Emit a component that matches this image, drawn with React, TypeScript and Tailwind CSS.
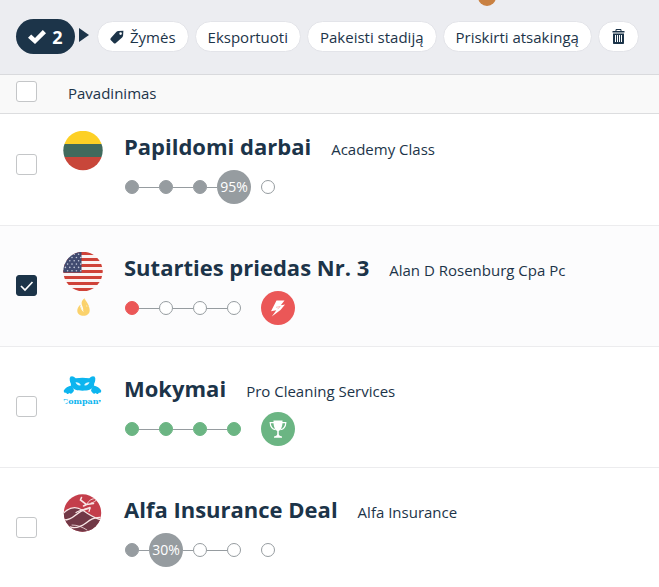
import { useState, type ReactNode } from "react";
import clsx from "clsx";

type StepState = "done" | "open" | "current";
type Tone = "gray" | "red" | "green";

interface Deal {
  id: string;
  title: string;
  company: string;
  logo: ReactNode;
  hot?: boolean;
  tone: Tone;
  steps: StepState[];
  progress?: string;
  result: "none" | "lost" | "won";
}

const fills: Record<Tone, string> = {
  gray: "bg-[#969ca0] border-[#969ca0]",
  red: "bg-[#eb5757] border-[#eb5757]",
  green: "bg-[#6bb583] border-[#6bb583]",
};

function LithuaniaFlag() {
  return (
    <svg viewBox="0 0 40 40" className="size-10" aria-hidden="true">
      <clipPath id="lt"><circle cx="20" cy="19.5" r="19.7" /></clipPath>
      <g clipPath="url(#lt)">
        <rect width="40" height="13" fill="#fdd025" />
        <rect y="13" width="40" height="13" fill="#406a5d" />
        <rect y="26" width="40" height="14" fill="#c8463a" />
      </g>
    </svg>
  );
}

function UsaFlag() {
  return (
    <svg viewBox="0 0 40 40" className="size-10" aria-hidden="true">
      <clipPath id="us"><circle cx="20" cy="19.5" r="19.7" /></clipPath>
      <g clipPath="url(#us)">
        <rect width="40" height="40" fill="#fbf3f2" />
        {[0, 1, 2, 3, 4, 5, 6].map((i) => (
          <rect key={i} y={i * 6} width="40" height="3" fill="#cf4238" />
        ))}
        <rect width="18.5" height="20.5" fill="#414b70" />
        {[0, 1, 2, 3, 4, 5].map((row) =>
          [0, 1, 2, 3].map((col) => (
            <circle key={`${row}-${col}`} cx={2.4 + col * 4.4 + (row % 2) * 2.2} cy={2.2 + row * 3.3} r="0.8" fill="#c3c8d8" />
          ))
        )}
      </g>
    </svg>
  );
}

function CatLogo() {
  return (
    <svg viewBox="0 0 40 40" className="size-10" aria-hidden="true">
      <clipPath id="cat"><circle cx="19.500" cy="20" r="20" /></clipPath>
      <g clipPath="url(#cat)">
        <g fill="#0db5ef">
          <path d="M7 3c2.300 0 4.200.8 5.700 2.300 4.600-.8 9-.8 13.600 0C27.800 3.800 29.700 3 32 3c.6 3 .3 5.500-.8 7.600.2 3.200-1.900 5.200-4.700 6.200-4 1.200-10 1.200-14 0-2.800-1-4.900-3-4.700-6.200C6.700 8.500 6.400 6 7 3Z" />
          <path d="M8.500 12.500C5 13.300 2.200 15 .8 17.500c-.3 1.800 1 2.600 2.300 2.200.8 1.600 2.600 1.500 3.300.4 1.200 1 2.900.6 3.400-.9 1.200-.7 1.300-1.700.9-2.700ZM30.500 12.500c3.500.8 6.300 2.500 7.700 5 .3 1.800-1 2.600-2.300 2.200-.8 1.600-2.600 1.500-3.300.4-1.200 1-2.900.6-3.400-.9-1.200-.7-1.300-1.700-.9-2.700Z" />
        </g>
        <path d="M12.500 9.300c2.400-.2 4.600.9 5.400 3-2.600.5-4.600-.7-5.400-3ZM26.500 9.300c-2.400-.2-4.600.9-5.400 3 2.600.5 4.600-.7 5.400-3Z" fill="#e6f8fe" />
        <text x="19.500" y="30.500" textAnchor="middle" fontSize="8" fill="#0db5ef" className="font-['DejaVu_Serif',serif] font-bold">Company</text>
      </g>
    </svg>
  );
}

function AlfaLogo() {
  return (
    <svg viewBox="0 0 40 40" className="size-10" aria-hidden="true">
      <clipPath id="alfa"><circle cx="19.500" cy="19" r="18.700" /></clipPath>
      <g clipPath="url(#alfa)">
        <rect width="40" height="40" fill="#c43e4b" />
        <path d="M0 19C5 14 12 12.500 18 15.500c7 3 12 8 22 11V40H0Z" fill="#713846" />
        <g fill="none" stroke="#f8e6e6" strokeLinecap="round">
          <path d="M0 19.500C6 13.500 13 12 19 16c7 4 11 8 20 10" strokeWidth="1.200" />
          <path d="M1 26c5 0 8-2 11-4.500S19 16 27 13.500" strokeWidth="1.500" />
          <path d="M13 18.500c4-2 7-4 14-4l-1 3" strokeWidth="1.200" />
          <path d="M7 33c7 2 12-1 16-4s8-6 15-5.500" strokeWidth="1.400" />
          <path d="M9 31c6 0 10 2 15 5" strokeWidth="0.800" />
          <path d="M18.500 3.500 17.500 6l6 4.500L20.500 12M23.500 10.500l7-1" strokeWidth="1.600" />
          <path d="M24 10c2-4 5-5.500 9-5.500M28 9c3-.5 5-2 6-4" strokeWidth="0.900" />
        </g>
      </g>
    </svg>
  );
}

function CheckIcon() {
  return (
    <svg viewBox="0 0 18 14" className="h-3.5 w-[18px]" aria-hidden="true">
      <path d="M0 7.700 3.200 4.400 7 8 14.800 0 18 3.200 7 14Z" fill="#fff" />
    </svg>
  );
}

function TagIcon() {
  return (
    <svg viewBox="0 0 14 14" className="size-3.5" aria-hidden="true">
      <path fillRule="evenodd" d="M13.400.7 8.300.9C7.600 1 7 1.300 6.500 1.800L.7 8.200c-.5.6-.5 1.200 0 1.700l3.200 3.300c.5.500 1.200.5 1.700 0l6.500-5.700c.6-.5.9-1.200 1-1.900ZM10.600 2.300a1.300 1.300 0 1 1 0 2.600 1.300 1.300 0 0 1 0-2.600Z" fill="#1c3449" />
    </svg>
  );
}

function TrashIcon() {
  return (
    <svg viewBox="0 0 13 15" className="h-[15px] w-[13px]" aria-hidden="true">
      <path d="M4 2V.5h5V2" fill="none" stroke="#1c3449" />
      <path d="M.5 2h12v1.500H.5Z" fill="#1c3449" />
      <path fillRule="evenodd" d="M1 4.500h11V14c0 .6-.4 1-1 1H2c-.6 0-1-.4-1-1ZM3 6v7h1V6Zm2 0v7h1V6Zm2 0v7h1V6Zm2 0v7h1V6Z" fill="#1c3449" />
    </svg>
  );
}

function FlameIcon() {
  return (
    <svg viewBox="0 0 13 18" className="h-[18px] w-[13px]" aria-hidden="true">
      <path d="M7.500.3C4 3 4.300 5.500 5.300 8c.8 2 1.200 3.500.8 5C5 11.500 4.300 9.500 3.200 6.800 1.200 8.700.2 10.700.3 12.800.4 16 3 17.800 6.500 17.800s6.200-1.900 6.200-5.500c0-2.300-.8-3.800-1.700-5.300L9.800 9C9.500 6 8 4 7.500.3Z" fill="#fbd26c" />
      <path d="M9.500 7.500C8.300 5.800 7.800 3.500 7.500.3 9 3.500 11 5 12 8.500Z" fill="#fbd26c" />
      <path d="M3.600 8c.4 2 1.200 3.800 2.700 5.500" stroke="#fdfdfd" strokeWidth="0.900" fill="none" />
    </svg>
  );
}

function BoltIcon() {
  return (
    <svg viewBox="0 0 16 17" className="h-[17px] w-4" aria-hidden="true">
      <path d="M6.500.5H14.500L10.800 5.300 15 4.600 10.500 10 1.800 16.500 6.300 10.300 1 11.200Z" fill="#fff" />
      <path d="m6 7.300 4.200-.8-2.700 2.700" fill="none" stroke="#eb5757" strokeWidth="0.400" />
    </svg>
  );
}

function TrophyIcon() {
  return (
    <svg viewBox="0 0 18 18" className="size-[18px]" aria-hidden="true">
      <path d="M4.500.5h9V2c0 4.500-1.500 8-3.700 9v3c0 1.300.8 2 3.200 2.500v1.300H5v-1.300c2.400-.5 3.200-1.200 3.200-2.500v-3C6 10 4.500 6.500 4.500 2Z" fill="#fff" />
      <path d="M5 2.700H1.200c.2 4 2 6.300 5.300 7M13 2.700h3.800c-.2 4-2 6.300-5.300 7" fill="none" stroke="#fff" strokeWidth="1.200" />
    </svg>
  );
}

const deals: Deal[] = [
  {
    id: "papildomi",
    title: "Papildomi darbai",
    company: "Academy Class",
    logo: <LithuaniaFlag />,
    tone: "gray",
    steps: ["done", "done", "done", "current"],
    progress: "95%",
    result: "none",
  },
  {
    id: "sutarties",
    title: "Sutarties priedas Nr. 3",
    company: "Alan D Rosenburg Cpa Pc",
    logo: <UsaFlag />,
    hot: true,
    tone: "red",
    steps: ["done", "open", "open", "open"],
    result: "lost",
  },
  {
    id: "mokymai",
    title: "Mokymai",
    company: "Pro Cleaning Services",
    logo: <CatLogo />,
    tone: "green",
    steps: ["done", "done", "done", "done"],
    result: "won",
  },
  {
    id: "alfa",
    title: "Alfa Insurance Deal",
    company: "Alfa Insurance",
    logo: <AlfaLogo />,
    tone: "gray",
    steps: ["done", "current", "open", "open"],
    progress: "30%",
    result: "none",
  },
];

interface CheckboxProps {
  label: string;
  checked: boolean;
  onChange: (checked: boolean) => void;
}

function Checkbox({ label, checked, onChange }: CheckboxProps) {
  return (
    <label className="grid size-[21px] shrink-0 cursor-pointer">
      <input
        type="checkbox"
        aria-label={label}
        checked={checked}
        onChange={(e) => onChange(e.target.checked)}
        className="col-start-1 row-start-1 size-[21px] cursor-pointer appearance-none rounded-[3px] border border-[#c4c6c8] bg-white checked:border-[#1c3449] checked:bg-[#1c3449]"
      />
      {checked && (
        <svg viewBox="0 0 21 21" className="pointer-events-none col-start-1 row-start-1 size-[21px]" aria-hidden="true">
          <path d="m5 11 4 4 7.500-8" fill="none" stroke="#fff" strokeWidth="1.700" />
        </svg>
      )}
    </label>
  );
}

function Pipeline({ deal }: { deal: Deal }) {
  return (
    <div className="flex h-[34px] items-center">
      {deal.steps.map((step, i) => (
        <div key={i} className="flex h-[34px] w-[34px] items-center">
          <span className={clsx("h-px flex-1", i > 0 && "bg-[#969ca0]")} />
          {step === "current" ? (
            <span className="flex size-[34px] shrink-0 items-center justify-center rounded-full bg-[#969ca0] text-sm text-white">
              {deal.progress}
            </span>
          ) : (
            <span
              className={clsx(
                "size-3.5 shrink-0 rounded-full border",
                step === "done" ? fills[deal.tone] : "border-[#969ca0] bg-white"
              )}
            />
          )}
          <span className={clsx("h-px flex-1", i < deal.steps.length - 1 && "bg-[#969ca0]")} />
        </div>
      ))}

      {/* Outcome */}
      {deal.result === "none" ? (
        <span className="ml-2.5 size-3.5 rounded-full border border-[#969ca0] bg-white" />
      ) : (
        <span className={clsx("ml-2.5 flex size-[34px] items-center justify-center rounded-full", fills[deal.tone])}>
          {deal.result === "won" ? <TrophyIcon /> : <BoltIcon />}
        </span>
      )}
    </div>
  );
}

const pill = "flex h-[31px] items-center gap-1.5 rounded-full border border-[#e3e4e9] bg-white whitespace-nowrap";

export default function App() {
  const [selected, setSelected] = useState<string[]>(["sutarties"]);

  const toggle = (id: string, on: boolean) =>
    setSelected((prev) => (on ? [...prev, id] : prev.filter((x) => x !== id)));

  return (
    <div className="min-h-screen overflow-x-hidden bg-white font-['Open_Sans',sans-serif] text-[15px] leading-5 text-[#1c3449]">
      {/* Bulk actions */}
      <header className="relative border-b border-[#d9dadd] bg-[#ecedf1] pt-[19px] pb-5 pl-4">
        <span className="absolute -top-3 left-[478px] size-[18px] rounded-full bg-[#c98142]" />
        <div className="flex items-center">
          <button className="flex h-[35px] w-[59px] items-center justify-center gap-1.5 rounded-full bg-[#1c3449] text-lg font-bold text-white">
            <CheckIcon />2
          </button>
          <svg viewBox="0 0 10 14" className="mr-2 mb-1 ml-1 h-3.5 w-2.5" aria-hidden="true">
            <path d="M0 0 10 7 0 14Z" fill="#1c3449" />
          </svg>
          <div className="flex gap-1.5">
            <button className={clsx(pill, "px-3")}><TagIcon />Žymės</button>
            <button className={clsx(pill, "px-3")}>Eksportuoti</button>
            <button className={clsx(pill, "px-3")}>Pakeisti stadiją</button>
            <button className={clsx(pill, "px-3")}>Priskirti atsakingą</button>
            <button className={clsx(pill, "px-[13px]")} aria-label="Ištrinti"><TrashIcon /></button>
          </div>
        </div>
      </header>

      {/* Column header */}
      <div className="flex items-start gap-[31px] border-b border-[#dcdddf] bg-[#f9f9f9] px-4 pt-1.5 pb-2.5">
        <Checkbox
          label="Pažymėti visus"
          checked={selected.length === deals.length}
          onChange={(on) => setSelected(on ? deals.map((d) => d.id) : [])}
        />
        <span className="pt-0.5">Pavadinimas</span>
      </div>

      <ul>
        {deals.map((deal) => {
          const checked = selected.includes(deal.id);
          return (
            <li
              key={deal.id}
              className={clsx(
                "flex items-start border-b border-[#ececee] px-4 pt-[26px] pb-[21px] first:pt-[17px]",
                checked && "bg-[#fcfcfd]"
              )}
            >
              <div className="pt-[23px]">
                <Checkbox label={deal.title} checked={checked} onChange={(on) => toggle(deal.id, on)} />
              </div>
              <div className="ml-[26px] flex h-[73px] flex-col items-center gap-1.5">
                {deal.logo}
                {deal.hot && <FlameIcon />}
              </div>
              <div className="ml-3 min-w-0">
                <div className="mb-2 flex items-baseline gap-5 pl-[9px] whitespace-nowrap">
                  <h2 className="text-[22px] leading-[31px] font-bold">{deal.title}</h2>
                  <span>{deal.company}</span>
                </div>
                <Pipeline deal={deal} />
              </div>
            </li>
          );
        })}
      </ul>
    </div>
  );
}
